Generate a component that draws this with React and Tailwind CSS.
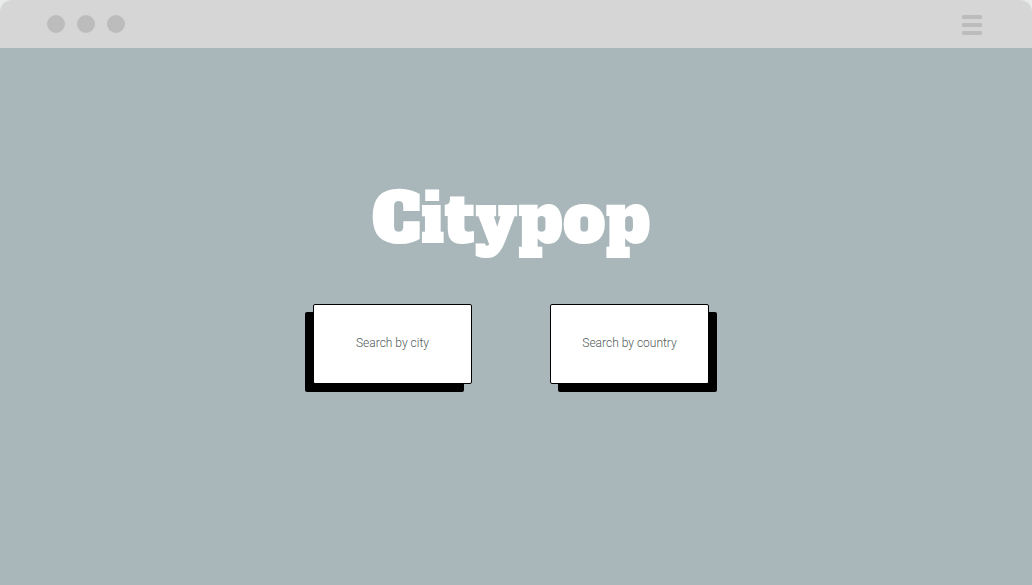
export default function App() {
  const card =
    "h-20 w-[159px] cursor-pointer rounded-[2px] border border-black bg-white pb-[2px] font-['Roboto',sans-serif] text-xs font-light text-[#4f5957]";
  return (
    <div className="flex min-h-screen flex-col bg-[#e9eaea]">
      <header className="flex h-12 shrink-0 items-center justify-between rounded-t-xl bg-[#d6d6d6] pl-[47px] pr-[50px]">
        <div className="flex gap-3" aria-hidden="true">
          <span className="size-[18px] rounded-full bg-[#bcbcbc]" />
          <span className="size-[18px] rounded-full bg-[#bcbcbc]" />
          <span className="size-[18px] rounded-full bg-[#bcbcbc]" />
        </div>
        <button type="button" aria-label="Menu" className="flex w-5 flex-col gap-1 pt-[2px]">
          <span className="h-1 w-full rounded-[1px] bg-[#bcbcbc]" />
          <span className="h-1 w-full rounded-[1px] bg-[#bcbcbc]" />
          <span className="h-1 w-full rounded-[1px] bg-[#bcbcbc]" />
        </button>
      </header>
      <main className="flex grow flex-col items-center bg-[#a9b7bb] pr-[10px] pt-[132px]">
        <h1 className="font-['Alfa_Slab_One','DejaVu_Serif',serif] text-[68px] font-normal leading-[80px] text-white">
          Citypop
        </h1>
        <div className="mt-[44px] flex gap-[78px]">
          <button type="button" className={card + " shadow-[-8px_8px_0_#000]"}>
            Search by city
          </button>
          <button type="button" className={card + " shadow-[8px_8px_0_#000]"}>
            Search by country
          </button>
        </div>
      </main>
    </div>
  );
}
